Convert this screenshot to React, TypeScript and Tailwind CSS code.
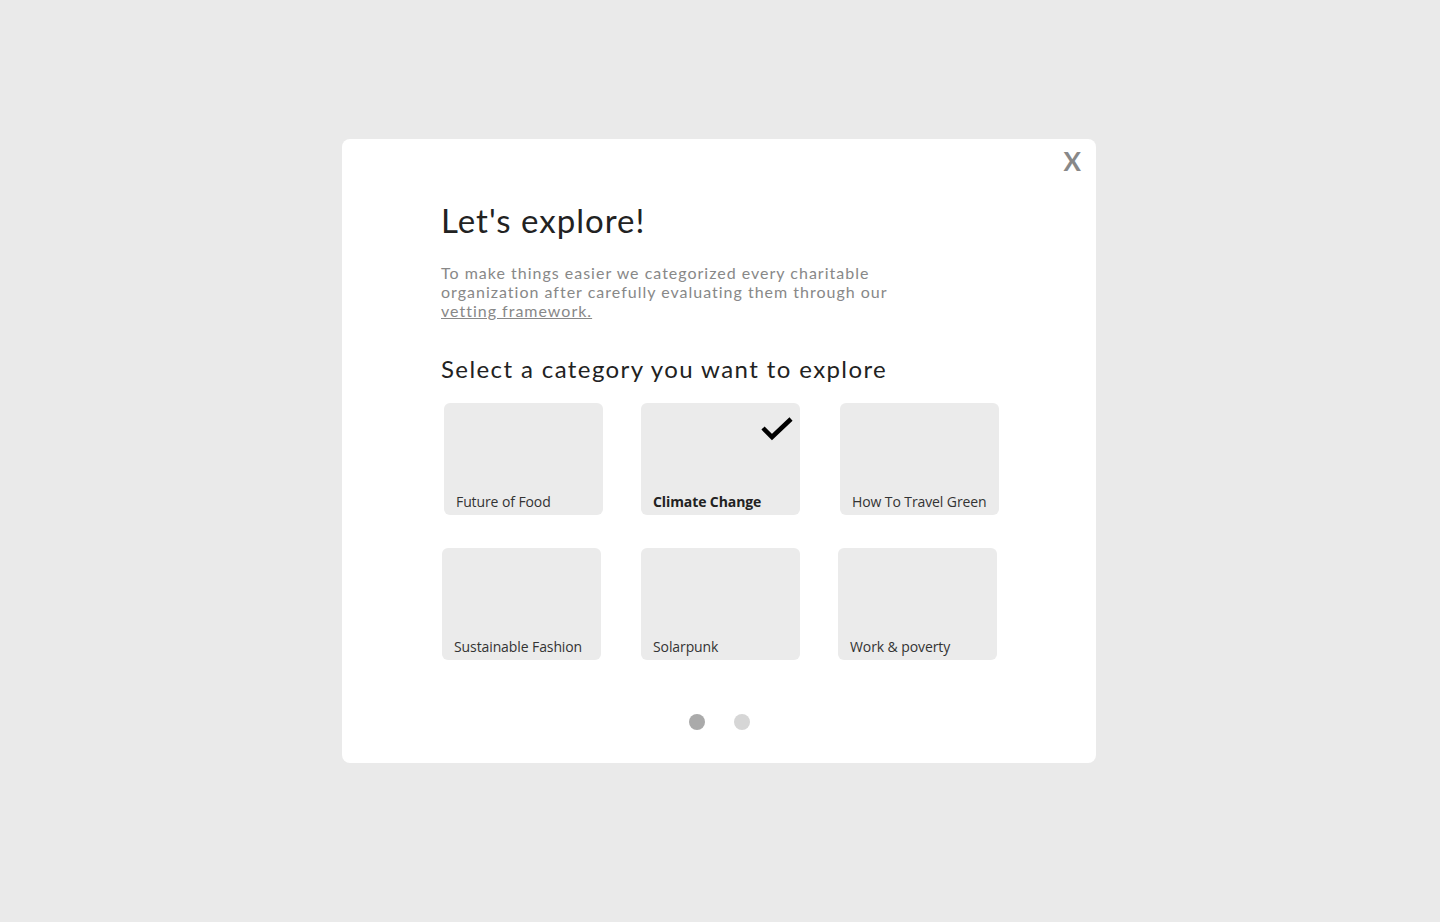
import { useState } from "react";

const categories = [
  { name: "Future of Food", ml: "ml-[3px]" },
  { name: "Climate Change", ml: "ml-[38px]" },
  { name: "How To Travel Green", ml: "ml-[40px]" },
  { name: "Sustainable Fashion", ml: "ml-[1px]" },
  { name: "Solarpunk", ml: "ml-[40px]" },
  { name: "Work & poverty", ml: "ml-[38px]" },
];

function CategoryCard({ name, ml, selected, onClick }: { name: string; ml: string; selected: boolean; onClick: () => void }) {
  return (
    <button
      onClick={onClick}
      className={`relative flex h-[112px] w-[159px] shrink-0 items-end rounded-md bg-[#ebebeb] px-3 pb-[3px] text-left ${ml}`}
    >
      {selected && (
        <svg className="absolute right-[6px] top-[13px]" width="34" height="26" viewBox="0 0 34 26" fill="none">
          <polyline points="3,12 12,21 31,3" stroke="#000" strokeWidth="4.5" />
        </svg>
      )}
      <span className={`whitespace-nowrap font-['Open_Sans',sans-serif] text-sm leading-5 tracking-[-0.1px] ${selected ? "font-bold text-[#222]" : "text-[#333]"}`}>
        {name}
      </span>
    </button>
  );
}

export default function App() {
  const [selected, setSelected] = useState("Climate Change");
  const [page, setPage] = useState(0);

  return (
    <div className="flex min-h-screen items-start justify-center bg-[#eaeaea] pr-[2px] pt-[139px]">
      <div className="relative h-[624px] w-[754px] rounded-lg bg-white pl-[99px] pt-[61px] font-['Lato',sans-serif]">
        <button className="absolute right-[15px] top-[9px] text-[26px] font-bold leading-none text-[#888]">X</button>

        <h1 className="text-[33px] leading-10 tracking-[1px] text-[#222]">Let's explore!</h1>
        <p className="mt-[23px] text-base leading-[19px] tracking-[1px] text-[#888]">
          To make things easier we categorized every charitable
          <br />
          organization after carefully evaluating them through our
          <br />
          <a href="#" className="underline">vetting framework.</a>
        </p>

        <h2 className="mt-[33px] text-[24px] leading-8 tracking-[1.4px] text-[#222]">Select a category you want to explore</h2>

        <div className="mt-[18px] flex">
          {categories.slice(0, 3).map((c) => (
            <CategoryCard key={c.name} {...c} selected={selected === c.name} onClick={() => setSelected(c.name)} />
          ))}
        </div>
        <div className="mt-[33px] flex">
          {categories.slice(3).map((c) => (
            <CategoryCard key={c.name} {...c} selected={selected === c.name} onClick={() => setSelected(c.name)} />
          ))}
        </div>

        <div className="ml-[248px] mt-[54px] flex gap-[29px]">
          {[0, 1].map((i) => (
            <button
              key={i}
              onClick={() => setPage(i)}
              className={`h-4 w-4 rounded-full ${page === i ? "bg-[#aaaaaa]" : "bg-[#d6d6d6]"}`}
            />
          ))}
        </div>
      </div>
    </div>
  );
}
